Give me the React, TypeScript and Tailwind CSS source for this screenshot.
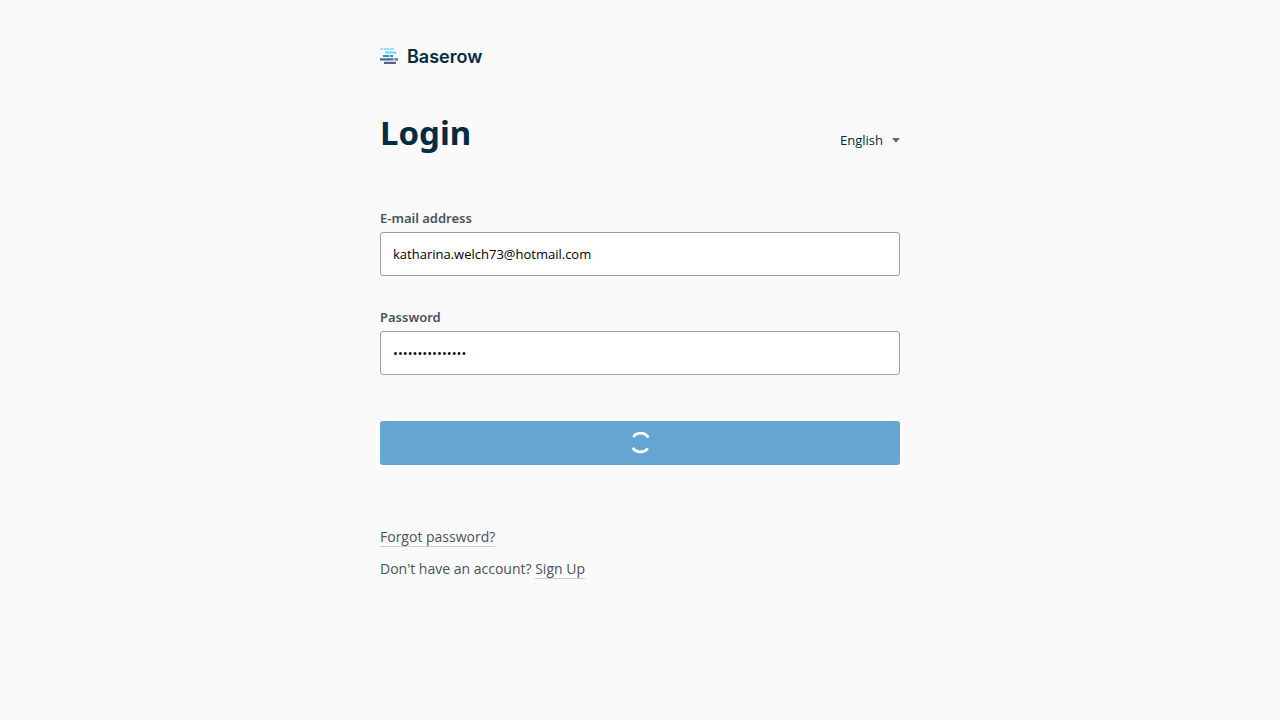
import { useState } from "react";

function Logo() {
  return (
    <a href="#" aria-label="Baserow" className="flex h-4 w-fit items-center gap-[9px] text-[#022b44]">
      <svg width="18" height="16" viewBox="0 0 18 16" aria-hidden="true">
        <path fill="#9be4fd" d="M0 0h3v2H0zM4 0h10v2H4z" />
        <path fill="#72d3fb" d="M5 3.5h11v2H5z" />
        <path fill="#139ec0" d="M3 7h6v2H3zM10 7h3v2h-3z" />
        <path fill="#4a69a8" d="M0 10.300h13.500v2.300H0zM14.500 10.300H18v2.300h-3.500z" />
        <path fill="#53657a" d="M4 13.800h12V16H4z" />
      </svg>
      <span className="pt-0.5 font-['Inter',sans-serif] text-[18px] leading-4 font-semibold">Baserow</span>
    </a>
  );
}

const inputClass =
  "h-11 w-full rounded-[3px] border border-[#9c9fa5] bg-white px-3 text-[13px] text-black outline-none";
const labelClass = "mb-1 block font-['Noto_Sans',sans-serif] text-[13px] leading-5 font-semibold text-[#4b5260]";
const linkClass = "inline-block border-b border-[#cdcecf] leading-[19px]";

export default function App() {
  const [email, setEmail] = useState("katharina.welch73@hotmail.com");
  const [password, setPassword] = useState("correcthorse123");
  const [language, setLanguage] = useState("en");

  return (
    <div className="min-h-screen bg-[#fafafa] font-['Open_Sans',sans-serif] text-[#4b5260]">
      <main className="mx-auto w-full max-w-[520px] py-12">
        <Logo />
        <div className="mt-12 flex items-end justify-between">
          <h1 className="font-['Noto_Sans',sans-serif] text-[33px] leading-[42px] font-bold text-[#022b44]">Login</h1>
          <div className="relative mb-1 flex items-center">
            <select
              aria-label="Language"
              value={language}
              onChange={(e) => setLanguage(e.target.value)}
              className="w-[60px] appearance-none bg-transparent text-[13px] leading-5 text-[#022b44] outline-none"
            >
              <option value="en">English</option>
              <option value="fr">Français</option>
              <option value="nl">Nederlands</option>
            </select>
            <svg className="pointer-events-none absolute right-0" width="8" height="5" viewBox="0 0 8 5" aria-hidden="true">
              <path d="M.8.5h6.4L4 4.200z" fill="#6a6b70" stroke="#6a6b70" strokeLinejoin="round" />
            </svg>
          </div>
        </div>

        <form className="mt-[54px]" onSubmit={(e) => e.preventDefault()}>
          <label htmlFor="email" className={labelClass}>E-mail address</label>
          <input id="email" type="email" value={email} onChange={(e) => setEmail(e.target.value)} className={inputClass} />
          <label htmlFor="password" className={`${labelClass} mt-[31px]`}>Password</label>
          <input id="password" type="password" value={password} onChange={(e) => setPassword(e.target.value)} className={inputClass} />
          <button
            type="submit"
            aria-label="Signing in"
            className="mt-[46px] flex h-11 w-full items-center justify-center rounded-[3px] bg-[#64a5d1]"
          >
            <svg width="22" height="22" viewBox="0 0 22 22" fill="none" stroke="#fff" strokeWidth="2.8" strokeLinecap="butt" aria-hidden="true">
              <path d="M4.300 4.800A9.200 9.200 0 0 1 19.300 5.400" />
              <path d="M3.800 15.800A9.200 9.200 0 0 0 18.800 16.400" />
            </svg>
          </button>
        </form>

        <div className="mt-[62px] flex flex-col items-start gap-3 text-sm leading-5">
          <a href="#forgot" className={linkClass}>Forgot password?</a>
          <p>
            Don't have an account? <a href="#signup" className={linkClass}>Sign Up</a>
          </p>
        </div>
      </main>
    </div>
  );
}
